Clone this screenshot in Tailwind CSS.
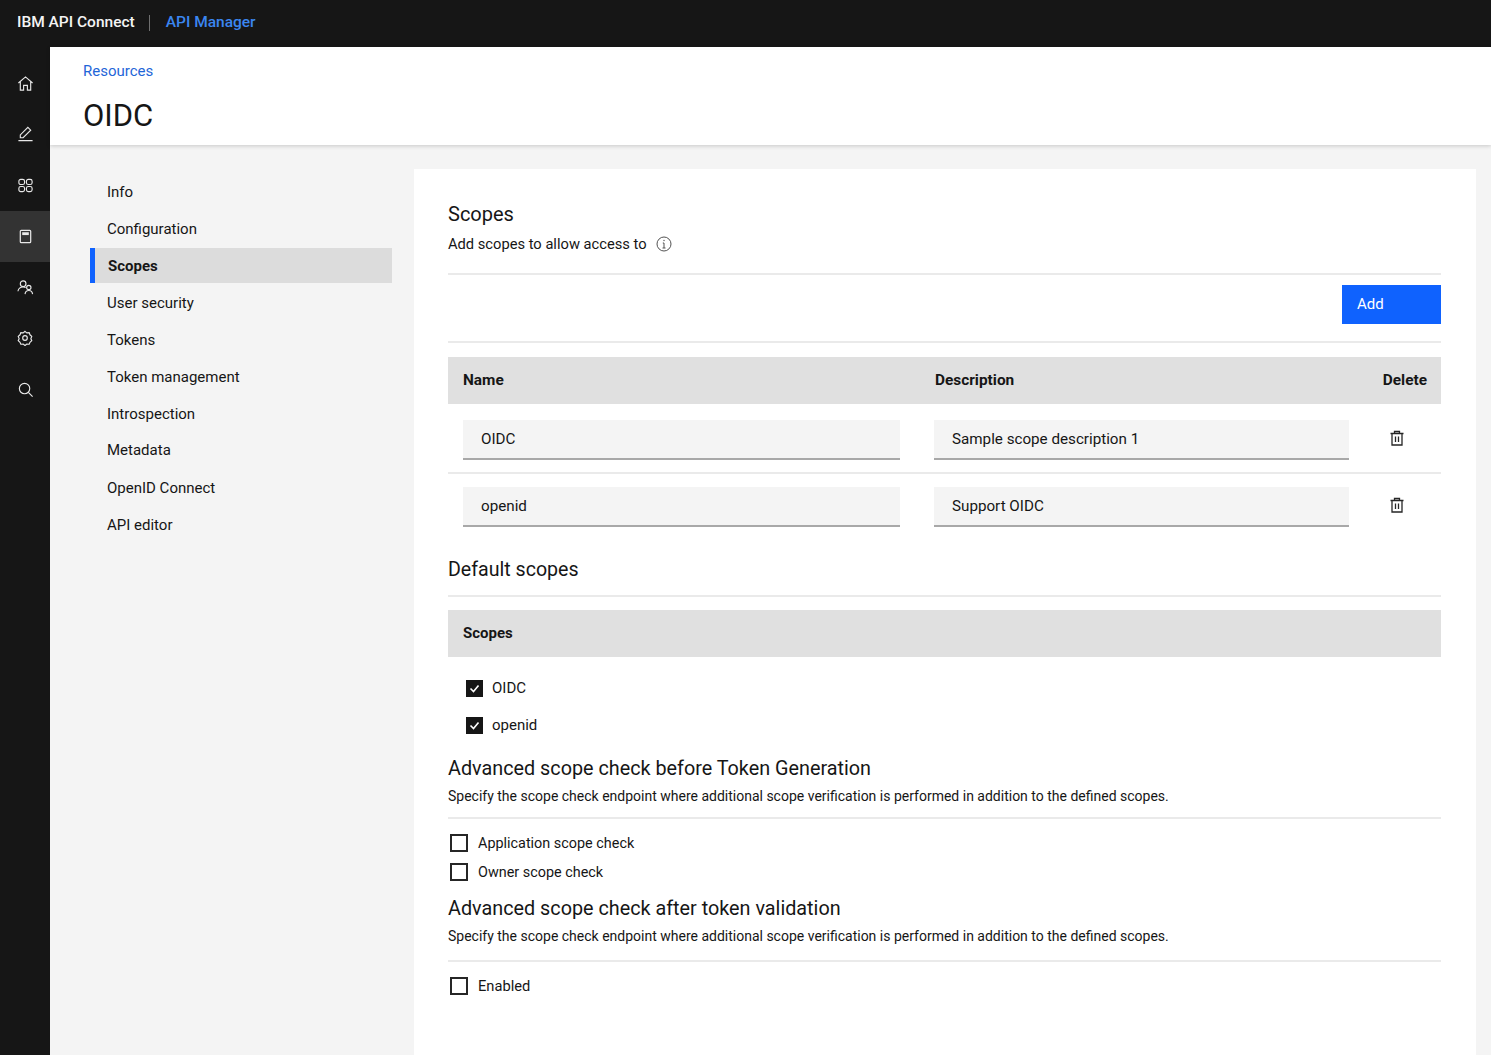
<!DOCTYPE html>
<html lang="en">
<head>
  <meta charset="UTF-8" />
  <title>IBM API Connect - API Manager</title>
  <script src="https://cdn.jsdelivr.net/npm/@tailwindcss/browser@4"></script>
</head>
<body class="bg-[#161616] text-[#161616] font-['Roboto',sans-serif] overflow-hidden">
  <div class="w-[1491px] h-[1055px] flex flex-col overflow-hidden">
    <!-- Top bar -->
    <header class="h-[47px] shrink-0 bg-[#161616] flex items-center pl-[17px] pb-[2px] text-[15.5px] font-medium">
      <span class="text-[#f4f4f4]">IBM API Connect</span>
      <span class="w-px h-[16px] bg-[#6f6f6f] ml-[14px] mr-[16px]"></span>
      <span class="text-[#3b86f0]">API Manager</span>
    </header>

    <div class="flex flex-1 min-h-0">
      <!-- Icon rail -->
      <nav class="w-[50px] shrink-0 bg-[#161616] pt-[11px] flex flex-col text-[#e8e8e8]">
        <div class="h-[51px] flex items-center justify-center">
          <svg class="w-[17px] h-[17px]" viewBox="0 0 18 18" fill="none" stroke="currentColor" stroke-width="1.200"><path d="M1.500 8.500 9 2l7.500 6.500M3.500 7v9h3.500v-5h4v5h3.500V7"/></svg>
        </div>
        <div class="h-[51px] flex items-center justify-center pb-[2px]">
          <svg class="w-[17px] h-[17px]" viewBox="0 0 18 18" fill="none" stroke="currentColor" stroke-width="1.200"><path d="M1.500 16.500h15M3.500 13.500v-3L11.500 2.500l3 3-8 8z"/></svg>
        </div>
        <div class="h-[51px] flex items-center justify-center">
          <svg class="w-[17px] h-[17px]" viewBox="0 0 18 18" fill="none" stroke="currentColor" stroke-width="1.200"><rect x="2" y="2.500" width="6" height="5.500" rx="2"/><rect x="10" y="2.500" width="6" height="5.500" rx="2"/><rect x="2" y="10" width="6" height="5.500" rx="2"/><rect x="10" y="10" width="6" height="5.500" rx="2"/></svg>
        </div>
        <div class="h-[51px] flex items-center justify-center bg-[#333333]">
          <svg class="w-[17px] h-[17px]" viewBox="0 0 18 18" fill="none" stroke="currentColor" stroke-width="1.300"><rect x="3.500" y="2.500" width="11" height="13" rx="1"/><rect x="5.500" y="4.500" width="7" height="3" fill="currentColor" stroke="none"/></svg>
        </div>
        <div class="h-[51px] flex items-center justify-center">
          <svg class="w-[17px] h-[17px]" viewBox="0 0 18 18" fill="none" stroke="currentColor" stroke-width="1.200"><circle cx="6.500" cy="5" r="3"/><path d="M1 13c.5-3 2.500-4.500 5.500-4.500 1 0 2 .2 2.700.6"/><circle cx="12.500" cy="9" r="2.300"/><path d="M8.500 16c.3-2.500 1.800-3.800 4-3.800s3.700 1.300 4 3.800"/></svg>
        </div>
        <div class="h-[51px] flex items-center justify-center pb-[2px]">
          <svg class="w-[16px] h-[16px]" viewBox="0 0 18 18" fill="none" stroke="currentColor" stroke-width="1.300"><path d="M9 1.500 11 3.200l2.700-.3.900 2.500 2 1.800-1 2.500 1 2.300-2 1.800-.9 2.200-2.700-.2-2 1.700-2-1.700-2.700.2-.9-2.200-2-1.800 1-2.300-1-2.500 2-1.800.9-2.500 2.700.3z"/><circle cx="9" cy="9" r="2.600"/></svg>
        </div>
        <div class="h-[51px] flex items-center justify-center">
          <svg class="w-[17px] h-[17px]" viewBox="0 0 18 18" fill="none" stroke="currentColor" stroke-width="1.200"><circle cx="8" cy="8" r="5.500"/><path d="m12 12 4.500 4.500"/></svg>
        </div>
      </nav>

      <div class="flex-1 min-w-0 bg-[#f4f4f4] flex flex-col">
        <!-- Page header -->
        <div class="h-[98px] shrink-0 bg-white pl-[33px] pt-[15px] shadow-[0_1px_4px_rgba(0,0,0,0.18)] relative">
          <a class="block text-[15px] leading-[18px] text-[#1f66d8]">Resources</a>
          <h1 class="mt-[18px] text-[31px] leading-[36px] font-normal">OIDC</h1>
        </div>

        <div class="flex flex-1 min-h-0 pt-[24px]">
          <!-- Section nav -->
          <ul class="w-[302px] ml-[40px] mr-[22px] shrink-0 text-[15px] pt-[4px]">
            <li class="h-[37px] flex items-center pl-[17px] pt-[2px]">Info</li>
            <li class="h-[37px] flex items-center pl-[17px] pt-[2px]">Configuration</li>
            <li class="h-[35px] my-[1px] flex items-center pl-[13px] pt-[2px] bg-[#dcdcdc] border-l-[5px] border-[#0f62fe] font-bold">Scopes</li>
            <li class="h-[37px] flex items-center pl-[17px] pt-[2px]">User security</li>
            <li class="h-[37px] flex items-center pl-[17px] pt-[2px]">Tokens</li>
            <li class="h-[37px] flex items-center pl-[17px] pt-[2px]">Token management</li>
            <li class="h-[37px] flex items-center pl-[17px] pt-[2px]">Introspection</li>
            <li class="h-[37px] flex items-center pl-[17px]">Metadata</li>
            <li class="h-[37px] flex items-center pl-[17px] pt-[2px]">OpenID Connect</li>
            <li class="h-[37px] flex items-center pl-[17px] pt-[2px]">API editor</li>
          </ul>

          <!-- Main panel -->
          <main class="w-[1062px] bg-white pl-[34px] pr-[35px] pt-[32px] text-[15px]">
            <h2 class="text-[20px] leading-[26px]">Scopes</h2>
            <p class="mt-[4px] h-[26px] flex items-center text-[14.7px]">
              Add scopes to allow access to
              <svg class="w-[16px] h-[16px] ml-[9px] text-[#525252]" viewBox="0 0 16 16" fill="none" stroke="currentColor" stroke-width="1"><circle cx="8" cy="8" r="7"/><path d="M8 7v5M6.500 12h3M6.800 7H8"/><circle cx="8" cy="4.500" r=".7" fill="currentColor" stroke="none"/></svg>
            </p>

            <div class="mt-[16px] border-t-2 border-[#eaeaea] h-[70px] border-b-2 flex justify-end items-start pt-[10px]">
              <button class="w-[99px] h-[39px] bg-[#0f62fe] text-white text-left pl-[15px]">Add</button>
            </div>

            <!-- Scope table -->
            <div class="mt-[14px] h-[47px] bg-[#e0e0e0] flex items-center font-bold text-[15.400px]">
              <span class="w-[487px] pl-[15px]">Name</span>
              <span class="flex-1">Description</span>
              <span class="pr-[14px]">Delete</span>
            </div>
            <div class="h-[70px] border-b-2 border-[#eaeaea] flex items-start pt-[16px] text-[15.200px]">
              <input class="ml-[15px] w-[437px] h-[40px] bg-[#f4f4f4] border-b-2 border-[#a8a8a8] pl-[18px]" value="OIDC" />
              <input class="ml-[34px] w-[415px] h-[40px] bg-[#f4f4f4] border-b-2 border-[#a8a8a8] pl-[18px]" value="Sample scope description 1" />
              <svg class="w-[16px] h-[16px] ml-[40px] mt-[10px]" viewBox="0 0 16 16" fill="none" stroke="#262626" stroke-width="1.300"><path d="M1.500 3.500h13M5.500 3.500V1.500h5v2M3 3.500v11.500h10V3.500M6.500 6.500v5.500M9.500 6.500v5.500"/></svg>
            </div>
            <div class="h-[67px] flex items-start pt-[13px] text-[15.200px]">
              <input class="ml-[15px] w-[437px] h-[40px] bg-[#f4f4f4] border-b-2 border-[#a8a8a8] pl-[18px]" value="openid" />
              <input class="ml-[34px] w-[415px] h-[40px] bg-[#f4f4f4] border-b-2 border-[#a8a8a8] pl-[18px]" value="Support OIDC" />
              <svg class="w-[16px] h-[16px] ml-[40px] mt-[10px]" viewBox="0 0 16 16" fill="none" stroke="#262626" stroke-width="1.300"><path d="M1.500 3.500h13M5.500 3.500V1.500h5v2M3 3.500v11.500h10V3.500M6.500 6.500v5.500M9.500 6.500v5.500"/></svg>
            </div>

            <!-- Default scopes -->
            <h3 class="h-[56px] pt-[15px] text-[19.600px] leading-[28px] border-b-2 border-[#eaeaea]">Default scopes</h3>
            <div class="mt-[13px] h-[47px] bg-[#e0e0e0] flex items-center font-bold pl-[15px]">Scopes</div>
            <label class="mt-[22px] h-[18px] flex items-center ml-[18px]">
              <span class="w-[17px] h-[17px] bg-[#161616] flex items-center justify-center mr-[9px]">
                <svg class="w-[13px] h-[13px]" viewBox="0 0 13 13" fill="none" stroke="white" stroke-width="1.600"><path d="m2.500 6.500 3 3 5-6"/></svg>
              </span>OIDC
            </label>
            <label class="mt-[19px] h-[18px] flex items-center ml-[18px]">
              <span class="w-[17px] h-[17px] bg-[#161616] flex items-center justify-center mr-[9px]">
                <svg class="w-[13px] h-[13px]" viewBox="0 0 13 13" fill="none" stroke="white" stroke-width="1.600"><path d="m2.500 6.500 3 3 5-6"/></svg>
              </span>openid
            </label>

            <h3 class="mt-[22px] text-[19.800px] leading-[26px]">Advanced scope check before Token Generation</h3>
            <p class="mt-[3px] h-[22px] text-[14px] leading-[22px]">Specify the scope check endpoint where additional scope verification is performed in addition to the defined scopes.</p>
            <div class="mt-[10px] border-t-2 border-[#eaeaea]"></div>
            <label class="mt-[15px] h-[18px] flex items-center ml-[2px] text-[14.400px]">
              <span class="w-[18px] h-[18px] border-2 border-[#262626] mr-[10px]"></span><span class="pt-[2px]">Application scope check</span>
            </label>
            <label class="mt-[11px] h-[18px] flex items-center ml-[2px] text-[14.400px]">
              <span class="w-[18px] h-[18px] border-2 border-[#262626] mr-[10px]"></span><span class="pt-[2px]">Owner scope check</span>
            </label>

            <h3 class="mt-[15px] text-[19.800px] leading-[26px]">Advanced scope check after token validation</h3>
            <p class="mt-[3px] h-[22px] text-[14px] leading-[22px]">Specify the scope check endpoint where additional scope verification is performed in addition to the defined scopes.</p>
            <div class="mt-[13px] border-t-2 border-[#eaeaea]"></div>
            <label class="mt-[15px] h-[18px] flex items-center ml-[2px] text-[14.700px]">
              <span class="w-[18px] h-[18px] border-2 border-[#262626] mr-[10px]"></span>Enabled
            </label>
          </main>
        </div>
      </div>
    </div>
  </div>
</body>
</html>
